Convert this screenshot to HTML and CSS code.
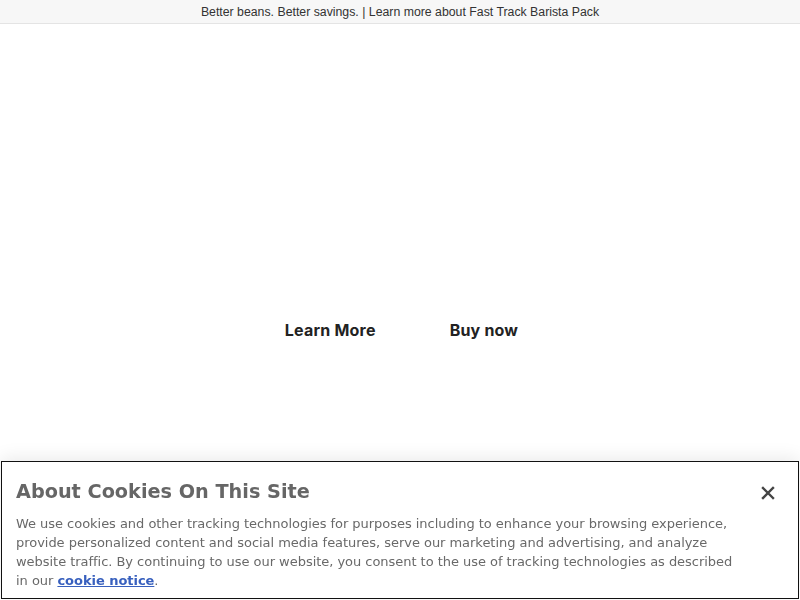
FILE: index.html
```html
<!DOCTYPE html>
<html>
<head>
	<meta charset="utf-8">
	<meta name="viewport" content="width=device-width, initial-scale=1">
	<title>Fast Track Barista Pack</title>
	<link rel="stylesheet" href="styles.css">
</head>
<body>
	<div class="promo-bar">
		<span>Better beans. Better savings. | Learn more about Fast Track Barista Pack</span>
	</div>

	<div class="hero">
		<div class="hero-links">
			<a href="#" class="hero-link">Learn More</a>
			<a href="#" class="hero-link">Buy now</a>
		</div>
	</div>

	<div class="cookie-banner">
		<div class="cookie-head">
			<h2 class="cookie-title">About Cookies On This Site</h2>
			<button class="cookie-close" aria-label="Close">
				<svg width="14" height="14" viewBox="0 0 14 14">
					<path d="M2 2 L12 12 M12 2 L2 12" stroke="#444" stroke-width="2.4" stroke-linecap="square"/>
				</svg>
			</button>
		</div>
		<p class="cookie-text">We use cookies and other tracking technologies for purposes including to enhance your browsing experience, provide personalized content and social media features, serve our marketing and advertising, and analyze website traffic. By continuing to use our website, you consent to the use of tracking technologies as described in our <a href="#">cookie notice</a>.</p>
	</div>
</body>
</html>
```

FILE: styles.css
```css
* {
	margin: 0px;
	padding: 0px;
	box-sizing: border-box;
}

body {
	background: #fff;
	font-family: "Roboto", sans-serif;
	width: 800px;
	height: 600px;
	overflow: hidden;
}

.promo-bar {
	height: 24px;
	background: #f7f7f7;
	border-bottom: 1px solid #e4e4e4;
	display: flex;
	align-items: center;
	justify-content: center;
	font-family: "Liberation Sans", sans-serif;
	font-size: 12.3px;
	color: #333;
}

.hero {
	height: 420px;
	display: flex;
	justify-content: center;
}

.hero-links {
	display: flex;
	gap: 74px;
	margin-top: 296px;
	margin-left: 3px;
}

.hero-link {
	font-family: "Inter", sans-serif;
	font-size: 16px;
	font-weight: 700;
	letter-spacing: 0.2px;
	color: #222;
	text-decoration: none;
	line-height: 20px;
}

.cookie-banner {
	position: fixed;
	left: 1px;
	right: 1px;
	bottom: 1px;
	height: 138px;
	background: #fff;
	border: 1px solid #111;
	box-shadow: 0px -4px 16px rgba(0, 0, 0, 0.08);
	padding: 16px 14px 0px 14px;
	font-family: "DejaVu Sans", sans-serif;
	color: #696969;
}

.cookie-head {
	display: flex;
	justify-content: space-between;
	align-items: flex-start;
}

.cookie-title {
	font-size: 19.25px;
	line-height: 28px;
	font-weight: bold;
	color: #666;
}

.cookie-close {
	background: none;
	border: none;
	margin-top: 8px;
	margin-right: 9px;
	cursor: pointer;
}

.cookie-text {
	margin-top: 8px;
	font-size: 13px;
	line-height: 19px;
	letter-spacing: -0.035px;
	max-width: 730px;
}

.cookie-text a {
	color: #3860be;
	font-weight: bold;
}
```
